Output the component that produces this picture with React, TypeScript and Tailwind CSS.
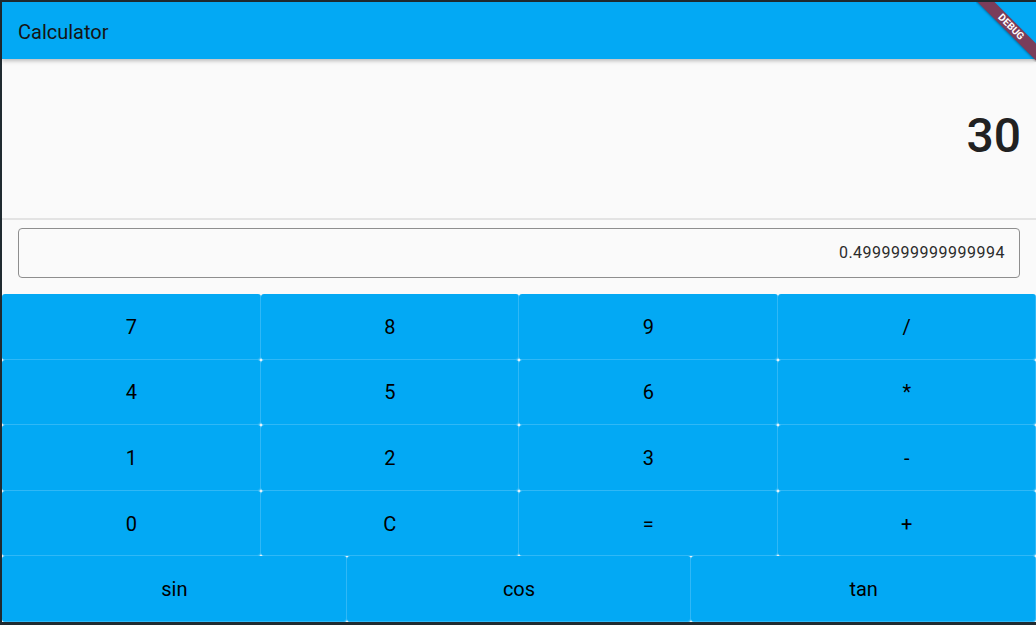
import React from "react";

const rows = [
  ["7", "8", "9", "/"],
  ["4", "5", "6", "*"],
  ["1", "2", "3", "-"],
  ["0", "C", "=", "+"],
];

function Btn({ label }: { label: string }) {
  return (
    <button className="flex items-center justify-center bg-[#03a9f4] rounded-[3px] text-[20px] text-black shadow-[inset_-1px_-1px_0_rgba(255,255,255,0.18)]">
      {label}
    </button>
  );
}

export default function App() {
  return (
    <div
      className="w-[1036px] h-[625px] bg-[#1f2a30] pt-[2px] pl-[2px] pb-[3px] overflow-hidden relative"
      style={{ fontFamily: "Roboto, 'Noto Sans', sans-serif" }}
    >
      <div className="w-full h-full flex flex-col bg-[#fafafa] relative">
        <div className="h-[57px] bg-[#03a9f4] flex items-center px-[16px] shadow-[0_2px_4px_rgba(0,0,0,0.25)] relative z-10">
          <span className="text-[20px] text-[#151515] mt-[2px]">Calculator</span>
        </div>
        <div className="h-[159px] flex items-center justify-end pr-[15px]">
          <span className="text-[48px] font-medium text-[#212121] leading-none mt-[-5px]">30</span>
        </div>
        <div className="h-[2px] bg-[#e3e3e3]" />
        <div className="px-[16px] pt-[8px] pb-[16px]">
          <div className="h-[50px] border border-[#8e8e8e] rounded-[4px] flex items-center justify-end pr-[14px]">
            <span className="text-[16px] tracking-[0.5px] text-[#2b2b2b]">0.4999999999999994</span>
          </div>
        </div>
        <div className="flex-1 flex flex-col">
          {rows.map((r, i) => (
            <div key={i} className="flex-1 grid grid-cols-4">
              {r.map((l) => (
                <Btn key={l} label={l} />
              ))}
            </div>
          ))}
          <div className="flex-1 grid grid-cols-3">
            <Btn label="sin" />
            <Btn label="cos" />
            <Btn label="tan" />
          </div>
        </div>
        <div className="absolute top-0 right-0 w-[60px] h-[60px] overflow-hidden z-20 pointer-events-none">
          <div className="absolute w-[110px] h-[12px] bg-[#7a3d5a] left-[-20px] top-[19px] rotate-45 flex items-center justify-center shadow-[0_1px_2px_rgba(0,0,0,0.3)]">
            <span className="text-[10px] font-bold text-white leading-none">DEBUG</span>
          </div>
        </div>
      </div>
    </div>
  );
}
